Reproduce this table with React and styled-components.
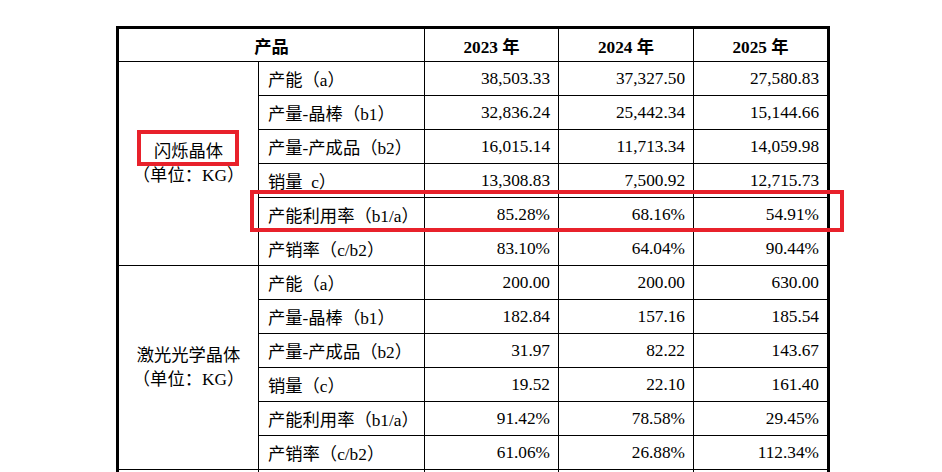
import React from "react";
import styled, { createGlobalStyle } from "styled-components";

const GlobalStyle = createGlobalStyle`
	html, body {
		margin: 0;
		padding: 0;
		background: #fff;
		overflow: hidden;
	}
	body {
		font-family: "Liberation Serif", "Noto Sans CJK SC", serif;
		color: #000;
	}
`;

const groups = [
	{
		name: "闪烁晶体",
		marked: true,
		rows: [
			["产能（a）", "38,503.33", "37,327.50", "27,580.83"],
			["产量-晶棒（b1）", "32,836.24", "25,442.34", "15,144.66"],
			["产量-产成品（b2）", "16,015.14", "11,713.34", "14,059.98"],
			["销量\u2002c）", "13,308.83", "7,500.92", "12,715.73"],
			["产能利用率（b1/a）", "85.28%", "68.16%", "54.91%", true],
			["产销率（c/b2）", "83.10%", "64.04%", "90.44%"]
		]
	},
	{
		name: "激光光学晶体",
		rows: [
			["产能（a）", "200.00", "200.00", "630.00"],
			["产量-晶棒（b1）", "182.84", "157.16", "185.54"],
			["产量-产成品（b2）", "31.97", "82.22", "143.67"],
			["销量（c）", "19.52", "22.10", "161.40"],
			["产能利用率（b1/a）", "91.42%", "78.58%", "29.45%"],
			["产销率（c/b2）", "61.06%", "26.88%", "112.34%"]
		]
	}
];

const App = () => {
	return (
		<Page>
			<GlobalStyle />
			<Table>
				<colgroup>
					<col style={{ width: 140 }} />
					<col style={{ width: 166 }} />
					<col style={{ width: 134 }} />
					<col style={{ width: 135 }} />
					<col style={{ width: 133 }} />
				</colgroup>
				<thead>
					<tr>
						<HeadCell colSpan={2}>产品</HeadCell>
						<HeadCell>2023 年</HeadCell>
						<HeadCell>2024 年</HeadCell>
						<HeadCell>2025 年</HeadCell>
					</tr>
				</thead>
				<tbody>
					{groups.map((group, g) =>
						group.rows.map((row, i) => (
							<Row key={`${g}-${i}`}>
								{i === 0 && (
									<GroupCell rowSpan={group.rows.length}>
										{group.marked ? <Mark>{group.name}</Mark> : group.name}
										<br />
										（单位：KG）
									</GroupCell>
								)}
								<LabelCell $boxed={row[4]}>{row[0]}</LabelCell>
								<ValueCell>{row[1]}</ValueCell>
								<ValueCell>{row[2]}</ValueCell>
								<ValueCell>{row[3]}</ValueCell>
							</Row>
						))
					)}
					<Row>
						<GroupCell />
						<LabelCell />
						<ValueCell />
						<ValueCell />
						<ValueCell />
					</Row>
				</tbody>
			</Table>
		</Page>
	);
};

const Page = styled.div`
	padding: 26px 0 0 116px;
`;

const Table = styled.table`
	border-collapse: separate;
	border-spacing: 0;
	table-layout: fixed;
	width: 714px;
	border: 3px solid #000;
	border-bottom: none;
	font-size: 17.3px;

	tr > *:last-child {
		border-right: none;
	}
`;

const HeadCell = styled.th`
	box-sizing: border-box;
	height: 33px;
	padding: 0;
	font-weight: bold;
	text-align: center;
	vertical-align: middle;
	border-right: 1px solid #000;
	border-bottom: 1px solid #000;
`;

const Row = styled.tr`
	height: 34px;
`;

const BaseCell = styled.td`
	box-sizing: border-box;
	height: 34px;
	padding: 0;
	vertical-align: middle;
	border-right: 1px solid #000;
	border-bottom: 1px solid #000;
	white-space: nowrap;
`;

const GroupCell = styled(BaseCell)`
	text-align: center;
	line-height: 24px;
`;

const LabelCell = styled(BaseCell)`
	text-align: left;
	padding-left: 9px;
	position: ${({ $boxed }) => ($boxed ? "relative" : "static")};

	${({ $boxed }) =>
		$boxed &&
		`
		&::after {
			content: "";
			position: absolute;
			top: -8px;
			left: -9px;
			width: 594px;
			height: 42px;
			box-sizing: border-box;
			border: 4px solid #e8212b;
			z-index: 2;
		}
	`}
`;

const ValueCell = styled(BaseCell)`
	text-align: right;
	padding-right: 8px;
`;

const Mark = styled.span`
	position: relative;
	display: inline-block;

	&::after {
		content: "";
		position: absolute;
		top: -10px;
		bottom: -2px;
		left: -17px;
		right: -16px;
		border: 4px solid #e8212b;
	}
`;

export default App;
